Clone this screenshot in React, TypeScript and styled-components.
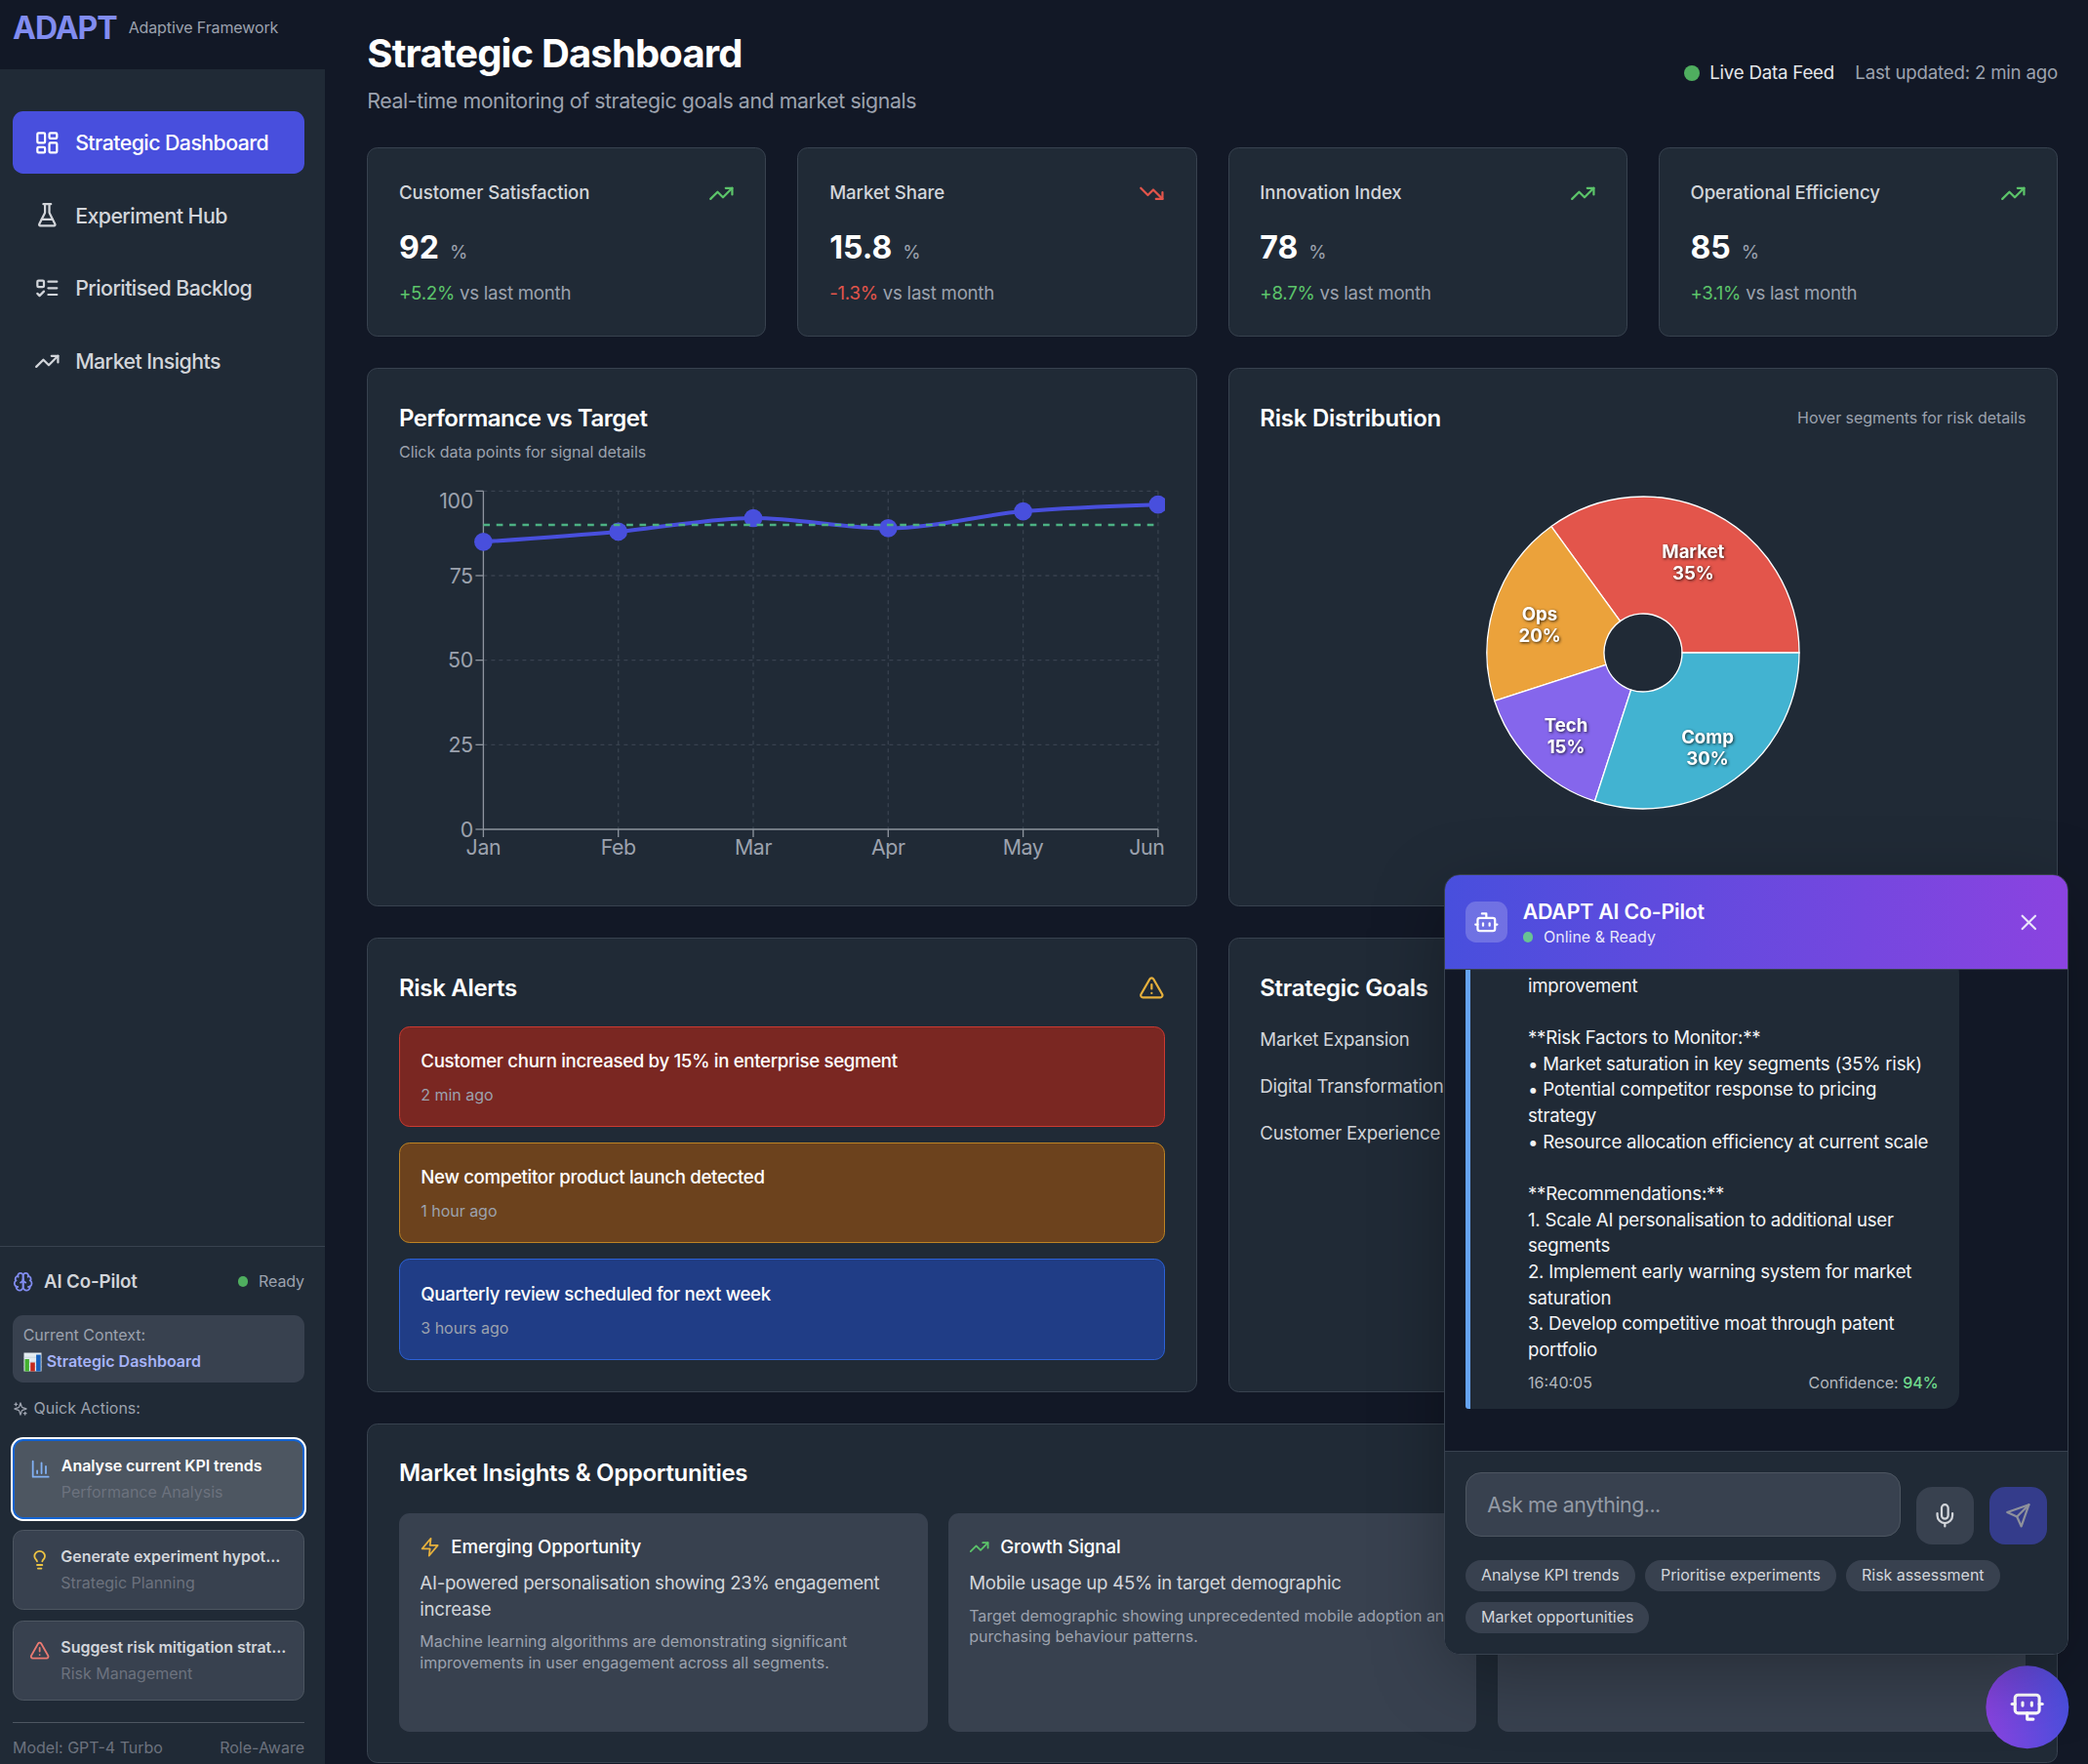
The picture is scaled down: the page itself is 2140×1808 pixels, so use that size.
import React from "react";
import styled, { createGlobalStyle, css } from "styled-components";

const c = {
  bg: "#121826",
  panel: "#202a36",
  line: "#38424f",
  raised: "#38414f",
  raisedLine: "#4d5661",
  indigo: "#484fdd",
  indigoSoft: "#818cf0",
  indigoPale: "#a6b3f7",
  purple: "#8b43e0",
  text: "#d2d5da",
  muted: "#9ca2ae",
  faint: "#6c727e",
  green: "#4fae5f",
  greenText: "#5cc46a",
  red: "#e3554b",
  amber: "#e6b03c",
};

const GlobalStyle = createGlobalStyle`
  *, *::before, *::after { box-sizing: border-box; }
  html, body { margin: 0; padding: 0; background: ${c.bg}; }
  body {
    font-family: Inter, "Liberation Sans", sans-serif;
    color: #fff;
    overflow: hidden;
    -webkit-font-smoothing: antialiased;
  }
  h1, h2, h3, p { margin: 0; }
  button { font: inherit; color: inherit; border: 0; padding: 0; }
`;

/* ---------- icons ---------- */

const iconPaths: Record<string, React.ReactNode> = {
  dashboard: (
    <>
      <rect width="7" height="9" x="3" y="3" rx="1" />
      <rect width="7" height="5" x="14" y="3" rx="1" />
      <rect width="7" height="9" x="14" y="12" rx="1" />
      <rect width="7" height="5" x="3" y="16" rx="1" />
    </>
  ),
  flask: (
    <>
      <path d="M10 2v7.527a2 2 0 0 1-.211.896L4.72 20.55a1 1 0 0 0 .9 1.45h12.76a1 1 0 0 0 .9-1.45l-5.069-10.127A2 2 0 0 1 14 9.527V2" />
      <path d="M8.5 2h7" />
      <path d="M7 16h10" />
    </>
  ),
  todo: (
    <>
      <rect x="3" y="5" width="6" height="6" rx="1" />
      <path d="m3 17 2 2 4-4" />
      <path d="M13 6h8" />
      <path d="M13 12h8" />
      <path d="M13 18h8" />
    </>
  ),
  up: (
    <>
      <polyline points="22 7 13.5 15.5 8.5 10.5 2 17" />
      <polyline points="16 7 22 7 22 13" />
    </>
  ),
  down: (
    <>
      <polyline points="22 17 13.5 8.5 8.5 13.5 2 7" />
      <polyline points="16 17 22 17 22 11" />
    </>
  ),
  brain: (
    <>
      <path d="M12 5a3 3 0 1 0-5.997.125 4 4 0 0 0-2.526 5.77 4 4 0 0 0 .556 6.588A4 4 0 1 0 12 18Z" />
      <path d="M12 5a3 3 0 1 1 5.997.125 4 4 0 0 1 2.526 5.77 4 4 0 0 1-.556 6.588A4 4 0 1 1 12 18Z" />
      <path d="M15 13a4.5 4.5 0 0 1-3-4 4.5 4.5 0 0 1-3 4" />
      <path d="M17.599 6.5a3 3 0 0 0 .399-1.375" />
      <path d="M6.003 5.125A3 3 0 0 0 6.401 6.5" />
      <path d="M3.477 10.896a4 4 0 0 1 .585-.396" />
      <path d="M19.938 10.5a4 4 0 0 1 .585.396" />
      <path d="M6 18a4 4 0 0 1-1.967-.516" />
      <path d="M19.967 17.484A4 4 0 0 1 18 18" />
    </>
  ),
  sparkles: (
    <>
      <path d="m12 3-1.912 5.813a2 2 0 0 1-1.275 1.275L3 12l5.813 1.912a2 2 0 0 1 1.275 1.275L12 21l1.912-5.813a2 2 0 0 1 1.275-1.275L21 12l-5.813-1.912a2 2 0 0 1-1.275-1.275L12 3Z" />
      <path d="M5 3v4" />
      <path d="M19 17v4" />
      <path d="M3 5h4" />
      <path d="M17 19h4" />
    </>
  ),
  bars: (
    <>
      <path d="M3 3v18h18" />
      <path d="M18 17V9" />
      <path d="M13 17V5" />
      <path d="M8 17v-3" />
    </>
  ),
  bulb: (
    <>
      <path d="M15 14c.2-1 .7-1.7 1.5-2.5 1-.9 1.5-2.2 1.5-3.5A6 6 0 0 0 6 8c0 1 .2 2.2 1.5 3.5.7.7 1.3 1.5 1.5 2.5" />
      <path d="M9 18h6" />
      <path d="M10 22h4" />
    </>
  ),
  alert: (
    <>
      <path d="m21.73 18-8-14a2 2 0 0 0-3.48 0l-8 14A2 2 0 0 0 4 21h16a2 2 0 0 0 1.73-3Z" />
      <path d="M12 9v4" />
      <path d="M12 17h.01" />
    </>
  ),
  zap: <polygon points="13 2 3 14 12 14 11 22 21 10 12 10 13 2" />,
  bot: (
    <>
      <path d="M12 8V4H8" />
      <rect width="16" height="12" x="4" y="8" rx="2" />
      <path d="M2 14h2" />
      <path d="M20 14h2" />
      <path d="M15 13v2" />
      <path d="M9 13v2" />
    </>
  ),
  close: (
    <>
      <path d="M18 6 6 18" />
      <path d="m6 6 12 12" />
    </>
  ),
  mic: (
    <>
      <path d="M12 2a3 3 0 0 0-3 3v7a3 3 0 0 0 6 0V5a3 3 0 0 0-3-3Z" />
      <path d="M19 10v2a7 7 0 0 1-14 0v-2" />
      <path d="M12 19v3" />
    </>
  ),
  send: (
    <>
      <path d="m22 2-7 20-4-9-9-4Z" />
      <path d="M22 2 11 13" />
    </>
  ),
};

const Svg = styled.svg`
  display: block;
  flex: none;
  fill: none;
  stroke: currentColor;
  stroke-width: 2;
  stroke-linecap: round;
  stroke-linejoin: round;
`;

function Icon({ name, size = 26.67, color }: { name: string; size?: number; color?: string }) {
  return (
    <Svg width={size} height={size} viewBox="0 0 24 24" color={color}>
      {iconPaths[name]}
    </Svg>
  );
}

/* ---------- shell ---------- */

const Shell = styled.div`
  display: flex;
  width: 2140px;
  height: 1808px;
  overflow: hidden;
`;

const Sidebar = styled.aside`
  width: 333px;
  flex: none;
  display: flex;
  flex-direction: column;
  background: ${c.panel};
`;

const Brand = styled.div`
  height: 71px;
  flex: none;
  display: flex;
  align-items: center;
  gap: 12px;
  padding: 0 13px 14px;
  background: ${c.bg};
`;

const BrandName = styled.span`
  padding-top: 1.5px;
  font-size: 32px;
  font-weight: 700;
  line-height: 42.67px;
  letter-spacing: -1px;
  color: ${c.indigoSoft};
`;

const BrandTag = styled.span`
  padding-bottom: 1.5px;
  font-size: 16px;
  letter-spacing: -0.12px;
  color: ${c.muted};
`;

const Nav = styled.nav`
  flex: 1;
  display: flex;
  flex-direction: column;
  gap: 10.67px;
  padding: 43px 21px 0 13px;
`;

const NavItem = styled.a<{ $active?: boolean }>`
  display: flex;
  align-items: center;
  gap: 16px;
  height: 64px;
  padding: 0 21.5px;
  border-radius: 10.67px;
  font-size: 21.33px;
  font-weight: 500;
  letter-spacing: -0.56px;
  white-space: nowrap;
  color: ${(p) => (p.$active ? "#fff" : c.text)};
  background: ${(p) => (p.$active ? c.indigo : "transparent")};
`;

const Copilot = styled.section`
  height: 531px;
  flex: none;
  border-top: 1.33px solid ${c.line};
  padding: 22px 21px 0 13px;
  display: flex;
  flex-direction: column;
  font-size: 16px;
  line-height: 21.33px;
`;

const CopilotHead = styled.div`
  display: flex;
  align-items: center;
  height: 26.67px;
  color: ${c.text};
`;

const CopilotTitle = styled.h3`
  flex: 1;
  margin-left: 10.67px;
  font-size: 18.67px;
  font-weight: 600;
  letter-spacing: -0.1px;
`;

const Dot = styled.span<{ $size: number; $color?: string }>`
  width: ${(p) => p.$size}px;
  height: ${(p) => p.$size}px;
  flex: none;
  border-radius: 50%;
  background: ${(p) => p.$color ?? c.green};
`;

const Muted = styled.span`
  color: ${c.muted};
`;

const ReadyLabel = styled(Muted)`
  margin-left: 10.67px;
  letter-spacing: -0.1px;
`;

const Context = styled.div`
  margin-top: 21.33px;
  height: 69px;
  padding: 9.67px 10.67px;
  display: flex;
  flex-direction: column;
  gap: 6.33px;
  border-radius: 10.67px;
  background: ${c.raised};
`;

const ContextValue = styled.div`
  display: flex;
  align-items: center;
  gap: 5px;
  font-weight: 600;
  color: ${c.indigoPale};
`;

const QuickLabel = styled.div`
  display: flex;
  align-items: center;
  gap: 5.5px;
  margin: 16px 0 20.67px;
  color: ${c.muted};
`;

const QuickList = styled.div`
  display: flex;
  flex-direction: column;
  gap: 10.67px;
`;

const QuickButton = styled.button<{ $focused?: boolean }>`
  height: 82.3px;
  display: flex;
  align-items: flex-start;
  gap: 11px;
  padding: 16px;
  border: 1.33px solid ${c.raisedLine};
  border-radius: 10.67px;
  background: ${c.raised};
  text-align: left;
  color: ${c.text};
  ${(p) =>
    p.$focused &&
    css`
      padding: 15.5px;
      color: #fff;
      background: ${c.raisedLine};
      border: 2px solid #1463d0;
      box-shadow: 0 0 0 2px #fff;
    `}
`;

const QuickIcon = styled.span`
  padding-top: 3px;
`;

const QuickText = styled.span`
  flex: 1;
  min-width: 0;
  display: flex;
  flex-direction: column;
  gap: 5.33px;
`;

const QuickTitle = styled.span`
  font-weight: 600;
  letter-spacing: -0.05px;
  white-space: nowrap;
`;

const QuickSub = styled.span`
  color: ${c.faint};
`;

const CopilotFoot = styled.div`
  display: flex;
  justify-content: space-between;
  margin-top: 21.33px;
  padding-top: 15px;
  border-top: 1.33px solid ${c.raisedLine};
  color: ${c.faint};
`;

/* ---------- main ---------- */

const Main = styled.main`
  flex: 1;
  min-width: 0;
  display: flex;
  flex-direction: column;
  gap: 32px;
  padding: 32.3px 31px 0 43.33px;
`;

const PageHead = styled.header`
  display: flex;
  justify-content: space-between;
  align-items: center;
  height: 87px;
`;

const PageTitle = styled.h1`
  margin-top: -2px;
  font-size: 40px;
  line-height: 48px;
  font-weight: 700;
  letter-spacing: -0.84px;
`;

const PageSub = styled.p`
  margin-top: 8.5px;
  font-size: 21.33px;
  line-height: 32px;
  letter-spacing: -0.42px;
  color: ${c.muted};
`;

const Feed = styled.div`
  display: flex;
  align-items: center;
  gap: 10.67px;
  padding-bottom: 1px;
  font-size: 18.67px;
  line-height: 26.67px;
  letter-spacing: -0.2px;
  color: #e4e6ea;
`;

const Updated = styled(Muted)`
  margin-left: 10.67px;
`;

const Grid = styled.div<{ $cols: number; $gap?: number }>`
  display: grid;
  flex: none;
  grid-template-columns: repeat(${(p) => p.$cols}, minmax(0, 1fr));
  gap: ${(p) => p.$gap ?? 32}px;
`;

const Card = styled.section<{ $h: number }>`
  flex: none;
  height: ${(p) => p.$h}px;
  padding: 31.67px;
  border: 1.33px solid ${c.line};
  border-radius: 10.67px;
  background: ${c.panel};
`;

const CardHead = styled.div`
  display: flex;
  justify-content: space-between;
  align-items: center;
`;

const KpiName = styled.h3`
  padding-top: 1.2px;
  font-size: 18.67px;
  line-height: 26.67px;
  font-weight: 500;
  letter-spacing: -0.1px;
  color: ${c.text};
`;

const KpiValue = styled.div`
  display: flex;
  align-items: baseline;
  gap: 11px;
  margin: 21.33px 0 6.8px;
  font-size: 32px;
  line-height: 42.67px;
  font-weight: 750;
`;

const KpiUnit = styled(Muted)`
  font-size: 18.67px;
  font-weight: 400;
`;

const KpiChange = styled.div`
  font-size: 18.67px;
  line-height: 26.67px;
  letter-spacing: -0.25px;
  color: ${c.muted};
`;

const Delta = styled.span<{ $down?: boolean }>`
  color: ${(p) => (p.$down ? c.red : c.greenText)};
`;

const CardTitle = styled.h2<{ $track?: number }>`
  font-size: 24px;
  line-height: 37.33px;
  font-weight: 600;
  letter-spacing: ${(p) => p.$track ?? -0.31}px;
`;

const Hint = styled.p`
  font-size: 16px;
  line-height: 21.33px;
  letter-spacing: -0.03px;
  color: ${c.muted};
`;

const LineHint = styled(Hint)`
  margin-top: 5.33px;
`;

const ChartSvg = styled.svg`
  display: block;
  font-family: inherit;
`;

const LineChartSvg = styled(ChartSvg)`
  margin-top: 21.9px;
`;

const PieWrap = styled.div`
  display: flex;
  justify-content: center;
  padding: 60.5px 0 0 1px;
`;

const PieLabel = styled.text`
  fill: #fff;
  font-size: 18.67px;
  font-weight: 750;
  letter-spacing: -0.1px;
  text-anchor: middle;
  filter: drop-shadow(1.5px 1.5px 1.5px rgba(0, 0, 0, 0.75));
`;

const AlertList = styled.div`
  display: flex;
  flex-direction: column;
  gap: 16px;
  margin-top: 20.7px;
`;

const AlertBox = styled.div<{ $bg: string; $line: string }>`
  height: 103.3px;
  padding: 22.33px 21.33px 0;
  display: flex;
  flex-direction: column;
  gap: 10.3px;
  border: 1.33px solid ${(p) => p.$line};
  border-radius: 10.67px;
  background: ${(p) => p.$bg};
`;

const AlertText = styled.p`
  font-size: 18.67px;
  line-height: 26.67px;
  font-weight: 500;
  letter-spacing: -0.34px;
`;

const GoalList = styled.div`
  display: flex;
  flex-direction: column;
  gap: 21.33px;
  margin-top: 21.33px;
  font-size: 18.67px;
  line-height: 26.67px;
  letter-spacing: -0.28px;
  color: ${c.text};
`;

const InsightGrid = styled(Grid)`
  margin-top: 21.8px;
`;

const Insight = styled.article`
  height: 224px;
  padding: 22px 21.33px 0;
  border-radius: 10.67px;
  background: ${c.raised};
`;

const InsightHead = styled.div`
  display: flex;
  align-items: center;
  gap: 10.67px;
  font-size: 18.67px;
  line-height: 26.67px;
  font-weight: 500;
  letter-spacing: -0.1px;
`;

const InsightText = styled.p`
  margin: 10.67px 0 9.2px;
  font-size: 18.67px;
  line-height: 26.67px;
  letter-spacing: -0.27px;
  color: ${c.text};
`;

/* ---------- chat ---------- */

const Chat = styled.section`
  position: absolute;
  left: 1480px;
  top: 896px;
  z-index: 3;
  width: 640px;
  height: 800px;
  display: flex;
  flex-direction: column;
  overflow: hidden;
  border: 1.33px solid ${c.line};
  border-radius: 16px;
  background: ${c.bg};
  box-shadow: 0 20px 80px -8px rgba(0, 0, 0, 0.35);
`;

const ChatHead = styled.header`
  height: 97px;
  flex: none;
  display: flex;
  align-items: center;
  padding: 0 26.67px 0 21px;
  border-bottom: 1.33px solid ${c.line};
  background: linear-gradient(90deg, ${c.indigo}, ${c.purple});
`;

const BotBadge = styled.div`
  width: 42.67px;
  height: 42.67px;
  display: grid;
  place-items: center;
  border-radius: 10.67px;
  background: rgba(255, 255, 255, 0.2);
`;

const ChatTitles = styled.div`
  flex: 1;
  margin-left: 16px;
`;

const ChatTitle = styled.h3`
  font-size: 21.33px;
  line-height: 30px;
  font-weight: 600;
  letter-spacing: -0.2px;
`;

const ChatStatus = styled.div`
  display: flex;
  align-items: center;
  gap: 10.67px;
  padding-top: 1px;
  font-size: 16px;
  line-height: 21.33px;
  color: rgba(255, 255, 255, 0.88);
`;

const Messages = styled.div`
  flex: 1;
  min-height: 0;
  display: flex;
  flex-direction: column;
  justify-content: flex-end;
  overflow: hidden;
  padding: 0 21px 43px;
`;

const Bubble = styled.div`
  width: 506px;
  flex: none;
  padding: 16px 21.33px 16px 59px;
  border-left: 5.33px solid #65a3f4;
  border-radius: 3px 16px 16px 3px;
  background: ${c.panel};
  font-size: 18.67px;
  line-height: 26.67px;
  color: #f2f3f5;
`;

const BubbleLine = styled.div`
  min-height: 26.67px;
  letter-spacing: -0.26px;
  white-space: nowrap;
`;

const BubbleMeta = styled.div`
  display: flex;
  justify-content: space-between;
  margin-top: 9.3px;
  font-size: 16px;
  line-height: 21.33px;
  color: #b3b7bd;
`;

const Confidence = styled.span`
  font-weight: 500;
  color: #71da8c;
`;

const Composer = styled.footer`
  height: 207.8px;
  flex: none;
  padding: 20.6px 21px 0;
  border-top: 1.33px solid ${c.line};
  background: ${c.panel};
`;

const ComposerRow = styled.div`
  display: flex;
  gap: 16.3px;
  height: 74px;
  align-items: flex-end;
`;

const Field = styled.div`
  flex: 1;
  align-self: flex-start;
  height: 66px;
  display: flex;
  align-items: center;
  padding: 0 21.33px;
  border: 1.33px solid ${c.raisedLine};
  border-radius: 16px;
  background: ${c.raised};
  font-size: 21.33px;
  letter-spacing: -0.49px;
  color: #939aa5;
`;

const SquareButton = styled.button<{ $send?: boolean }>`
  width: 58.67px;
  height: 58.67px;
  display: grid;
  place-items: center;
  border-radius: 16px;
  background: ${(p) => (p.$send ? "#343c8b" : c.raised)};
  color: ${(p) => (p.$send ? "#8e919c" : c.text)};
`;

const Chips = styled.div`
  display: flex;
  flex-wrap: wrap;
  gap: 11.2px 10.2px;
  margin-top: 16px;
`;

const Chip = styled.button`
  height: 32px;
  padding: 0 16px;
  border-radius: 16px;
  background: ${c.raised};
  font-size: 16px;
  line-height: 21.33px;
  letter-spacing: -0.04px;
  color: ${c.text};
`;

const Fab = styled.button`
  position: absolute;
  left: 2035px;
  top: 1707px;
  z-index: 2;
  width: 85.33px;
  height: 85.33px;
  display: grid;
  place-items: center;
  border-radius: 50%;
  background: linear-gradient(85deg, ${c.indigo}, ${c.purple});
  transform: rotate(180deg);
`;

/* ---------- charts ---------- */

const months = ["Jan", "Feb", "Mar", "Apr", "May", "Jun"];
const actual = [85, 88, 92, 89, 94, 96];

function monotonePath(pts: [number, number][]) {
  const n = pts.length;
  const slope = (i: number) => (pts[i + 1][1] - pts[i][1]) / (pts[i + 1][0] - pts[i][0]);
  const m = new Array<number>(n).fill(0);
  for (let i = 1; i < n - 1; i++) {
    const a = slope(i - 1);
    const b = slope(i);
    m[i] =
      (Math.sign(a) + Math.sign(b)) * Math.min(Math.abs(a), Math.abs(b), 0.25 * Math.abs(a + b)) || 0;
  }
  m[0] = (3 * slope(0) - m[1]) / 2;
  m[n - 1] = (3 * slope(n - 2) - m[n - 2]) / 2;
  let d = `M${pts[0][0]},${pts[0][1]}`;
  for (let i = 0; i < n - 1; i++) {
    const dx = (pts[i + 1][0] - pts[i][0]) / 3;
    d += `C${pts[i][0] + dx},${pts[i][1] + dx * m[i]},${pts[i + 1][0] - dx},${
      pts[i + 1][1] - dx * m[i + 1]
    },${pts[i + 1][0]},${pts[i + 1][1]}`;
  }
  return d;
}

function PerformanceChart() {
  const x0 = 86.4;
  const step = 138.3;
  const x1 = x0 + step * 5;
  const y = (v: number) => 7.3 + (100 - v) * 3.467;
  const x = (i: number) => x0 + i * step;
  const pts = actual.map((v, i) => [x(i), y(v)] as [number, number]);
  return (
    <LineChartSvg width="785" height="400" viewBox="0 0 785 400">
      <g stroke={c.line} strokeWidth="1.33" strokeDasharray="4 4">
        {[100, 75, 50, 25].map((v) => (
          <line key={v} x1={x0} x2={x1} y1={y(v)} y2={y(v)} />
        ))}
        {months.slice(1).map((mo, i) => (
          <line key={mo} x1={x(i + 1)} x2={x(i + 1)} y1={y(100)} y2={y(0)} />
        ))}
      </g>
      <g stroke="#8d949e" strokeWidth="1.33">
        <line x1={x0} x2={x0} y1={y(100)} y2={y(0)} />
        <line x1={x0} x2={x1} y1={y(0)} y2={y(0)} />
        {[100, 75, 50, 25, 0].map((v) => (
          <line key={v} x1={x0 - 8} x2={x0} y1={y(v)} y2={y(v)} />
        ))}
        {months.map((mo, i) => (
          <line key={mo} x1={x(i)} x2={x(i)} y1={y(0)} y2={y(0) + 8} />
        ))}
      </g>
      <g fill={c.muted} fontSize="21.33" letterSpacing="-0.4">
        {[100, 75, 50, 25, 0].map((v) => (
          <text key={v} x={x0 - 10.7} y={(v === 100 ? 17 : y(v)) + 7.8} textAnchor="end">
            {v}
          </text>
        ))}
        {months.map((mo, i) => (
          <text
            key={mo}
            x={i === 5 ? 784.5 : x(i)}
            y={y(0) + 25.8}
            textAnchor={i === 5 ? "end" : "middle"}
          >
            {mo}
          </text>
        ))}
      </g>
      <path d={monotonePath(pts)} fill="none" stroke={c.indigo} strokeWidth="4" />
      {pts.map(([px, py]) => (
        <circle key={px} cx={px} cy={py} r="9.33" fill={c.indigo} />
      ))}
      <line
        x1={x0}
        x2={x1}
        y1={y(90)}
        y2={y(90)}
        stroke="#4cb183"
        strokeWidth="2.67"
        strokeDasharray="6.67 6.67"
      />
    </LineChartSvg>
  );
}

const slices = [
  { name: "Market", value: 35, color: c.red, x: 212.3, y: 57 },
  { name: "Ops", value: 20, color: "#eba23b", x: 55, y: 121.6 },
  { name: "Tech", value: 15, color: "#8566ec", x: 82, y: 235.5 },
  { name: "Comp", value: 30, color: "#42b3d1", x: 227, y: 247 },
];

function RiskPie() {
  const cx = 161;
  const cy = 161;
  const at = (deg: number, r: number) =>
    `${cx + r * Math.cos((deg * Math.PI) / 180)},${cy - r * Math.sin((deg * Math.PI) / 180)}`;
  let start = 0;
  const parts = slices.map((s) => {
    const end = start + s.value * 3.6;
    const d = `M${at(start, 160)}A160,160,0,0,0,${at(end, 160)}L${at(end, 40)}A40,40,0,0,1,${at(start, 40)}Z`;
    start = end;
    return { ...s, d };
  });
  return (
    <ChartSvg width="322" height="322" viewBox="0 0 322 322">
      {parts.map((s) => (
        <path key={s.name} d={s.d} fill={s.color} stroke="#fff" strokeWidth="1.33" />
      ))}
      {parts.map((s) => (
        <PieLabel key={s.name} x={s.x} y={s.y + 6.8}>
          {s.name}
          <tspan x={s.x} dy="22">
            {s.value}%
          </tspan>
        </PieLabel>
      ))}
    </ChartSvg>
  );
}

function BarEmoji() {
  return (
    <svg width="19" height="20" viewBox="0 0 19 20">
      <rect x="0.5" y="0.5" width="18" height="19" fill="#e3ecf1" />
      <path d="M0.5 5.2h18M0.5 10h18M0.5 14.8h18" stroke="#c3d2da" strokeWidth="0.8" />
      <rect x="1.5" y="7" width="4.4" height="12.5" fill="#43b02f" />
      <rect x="7.2" y="10.5" width="4.6" height="9" fill="#c42a1d" />
      <rect x="13.1" y="2.5" width="4.6" height="17" fill="#1560bd" />
    </svg>
  );
}

/* ---------- data ---------- */

const nav = [
  { icon: "dashboard", label: "Strategic Dashboard" },
  { icon: "flask", label: "Experiment Hub" },
  { icon: "todo", label: "Prioritised Backlog" },
  { icon: "up", label: "Market Insights" },
];

const quick = [
  { icon: "bars", color: "#82b1f3", title: "Analyse current KPI trends", sub: "Performance Analysis" },
  { icon: "bulb", color: "#edc443", title: "Generate experiment hypot...", sub: "Strategic Planning" },
  { icon: "alert", color: "#ea7a72", title: "Suggest risk mitigation strat...", sub: "Risk Management" },
];

const kpis = [
  { name: "Customer Satisfaction", value: "92", delta: "+5.2%" },
  { name: "Market Share", value: "15.8", delta: "-1.3%" },
  { name: "Innovation Index", value: "78", delta: "+8.7%" },
  { name: "Operational Efficiency", value: "85", delta: "+3.1%" },
];

const alerts = [
  { text: "Customer churn increased by 15% in enterprise segment", time: "2 min ago", bg: "#7a2722", line: "#cc3a31" },
  { text: "New competitor product launch detected", time: "1 hour ago", bg: "#6c421d", line: "#be8424" },
  { text: "Quarterly review scheduled for next week", time: "3 hours ago", bg: "#203d86", line: "#2c62d8" },
];

const reply = [
  "improvement",
  "",
  "**Risk Factors to Monitor:**",
  "• Market saturation in key segments (35% risk)",
  "• Potential competitor response to pricing",
  "strategy",
  "• Resource allocation efficiency at current scale",
  "",
  "**Recommendations:**",
  "1. Scale AI personalisation to additional user",
  "segments",
  "2. Implement early warning system for market",
  "saturation",
  "3. Develop competitive moat through patent",
  "portfolio",
];

const prompts = ["Analyse KPI trends", "Prioritise experiments", "Risk assessment", "Market opportunities"];

export default function App() {
  return (
    <>
      <GlobalStyle />
      <Shell>
        <Sidebar>
          <Brand>
            <BrandName>ADAPT</BrandName>
            <BrandTag>Adaptive Framework</BrandTag>
          </Brand>
          <Nav>
            {nav.map((n, i) => (
              <NavItem key={n.label} $active={i === 0}>
                <Icon name={n.icon} />
                {n.label}
              </NavItem>
            ))}
          </Nav>
          <Copilot>
            <CopilotHead>
              <Icon name="brain" size={21.33} color={c.indigoSoft} />
              <CopilotTitle>AI Co-Pilot</CopilotTitle>
              <Dot $size={10.67} />
              <ReadyLabel>Ready</ReadyLabel>
            </CopilotHead>
            <Context>
              <Muted>Current Context:</Muted>
              <ContextValue>
                <BarEmoji />
                Strategic Dashboard
              </ContextValue>
            </Context>
            <QuickLabel>
              <Icon name="sparkles" size={16} />
              Quick Actions:
            </QuickLabel>
            <QuickList>
              {quick.map((q, i) => (
                <QuickButton key={q.title} $focused={i === 0}>
                  <QuickIcon>
                    <Icon name={q.icon} size={21.33} color={q.color} />
                  </QuickIcon>
                  <QuickText>
                    <QuickTitle>{q.title}</QuickTitle>
                    <QuickSub>{q.sub}</QuickSub>
                  </QuickText>
                </QuickButton>
              ))}
            </QuickList>
            <CopilotFoot>
              <span>Model: GPT-4 Turbo</span>
              <span>Role-Aware</span>
            </CopilotFoot>
          </Copilot>
        </Sidebar>

        <Main>
          <PageHead>
            <div>
              <PageTitle>Strategic Dashboard</PageTitle>
              <PageSub>Real-time monitoring of strategic goals and market signals</PageSub>
            </div>
            <Feed>
              <Dot $size={16} />
              Live Data Feed
              <Updated>Last updated: 2 min ago</Updated>
            </Feed>
          </PageHead>

          <Grid $cols={4}>
            {kpis.map((k) => {
              const isDown = k.delta.startsWith("-");
              return (
                <Card key={k.name} $h={193.9}>
                  <CardHead>
                    <KpiName>{k.name}</KpiName>
                    <Icon name={isDown ? "down" : "up"} color={isDown ? c.red : c.greenText} />
                  </CardHead>
                  <KpiValue>
                    {k.value}
                    <KpiUnit>%</KpiUnit>
                  </KpiValue>
                  <KpiChange>
                    <Delta $down={isDown}>{k.delta}</Delta> vs last month
                  </KpiChange>
                </Card>
              );
            })}
          </Grid>

          <Grid $cols={2}>
            <Card $h={552}>
              <CardTitle $track={-0.49}>Performance vs Target</CardTitle>
              <LineHint>Click data points for signal details</LineHint>
              <PerformanceChart />
            </Card>
            <Card $h={552}>
              <CardHead>
                <CardTitle $track={-0.25}>Risk Distribution</CardTitle>
                <Hint>Hover segments for risk details</Hint>
              </CardHead>
              <PieWrap>
                <RiskPie />
              </PieWrap>
            </Card>
          </Grid>

          <Grid $cols={2}>
            <Card $h={465.6}>
              <CardHead>
                <CardTitle>Risk Alerts</CardTitle>
                <Icon name="alert" color={c.amber} />
              </CardHead>
              <AlertList>
                {alerts.map((a) => (
                  <AlertBox key={a.text} $bg={a.bg} $line={a.line}>
                    <AlertText>{a.text}</AlertText>
                    <Hint>{a.time}</Hint>
                  </AlertBox>
                ))}
              </AlertList>
            </Card>
            <Card $h={465.6}>
              <CardTitle>Strategic Goals</CardTitle>
              <GoalList>
                <span>Market Expansion</span>
                <span>Digital Transformation</span>
                <span>Customer Experience</span>
              </GoalList>
            </Card>
          </Grid>

          <Card $h={348.6}>
            <CardTitle>Market Insights &amp; Opportunities</CardTitle>
            <InsightGrid $cols={3} $gap={21.33}>
              <Insight>
                <InsightHead>
                  <Icon name="zap" size={21.33} color={c.amber} />
                  Emerging Opportunity
                </InsightHead>
                <InsightText>AI-powered personalisation showing 23% engagement increase</InsightText>
                <Hint>
                  Machine learning algorithms are demonstrating significant improvements in user
                  engagement across all segments.
                </Hint>
              </Insight>
              <Insight>
                <InsightHead>
                  <Icon name="up" size={21.33} color={c.greenText} />
                  Growth Signal
                </InsightHead>
                <InsightText>Mobile usage up 45% in target demographic</InsightText>
                <Hint>
                  Target demographic showing unprecedented mobile adoption and purchasing behaviour
                  patterns.
                </Hint>
              </Insight>
              <Insight />
            </InsightGrid>
          </Card>
        </Main>
      </Shell>

      <Chat>
        <ChatHead>
          <BotBadge>
            <Icon name="bot" />
          </BotBadge>
          <ChatTitles>
            <ChatTitle>ADAPT AI Co-Pilot</ChatTitle>
            <ChatStatus>
              <Dot $size={10.67} $color="#68c294" />
              Online &amp; Ready
            </ChatStatus>
          </ChatTitles>
          <Icon name="close" color="#e9e3fa" />
        </ChatHead>
        <Messages>
          <Bubble>
            {reply.map((line, i) => (
              <BubbleLine key={i}>{line}</BubbleLine>
            ))}
            <BubbleMeta>
              <span>16:40:05</span>
              <span>
                Confidence: <Confidence>94%</Confidence>
              </span>
            </BubbleMeta>
          </Bubble>
        </Messages>
        <Composer>
          <ComposerRow>
            <Field>Ask me anything...</Field>
            <SquareButton>
              <Icon name="mic" />
            </SquareButton>
            <SquareButton $send>
              <Icon name="send" />
            </SquareButton>
          </ComposerRow>
          <Chips>
            {prompts.map((p) => (
              <Chip key={p}>{p}</Chip>
            ))}
          </Chips>
        </Composer>
      </Chat>

      <Fab>
        <Icon name="bot" size={37.33} />
      </Fab>
    </>
  );
}
